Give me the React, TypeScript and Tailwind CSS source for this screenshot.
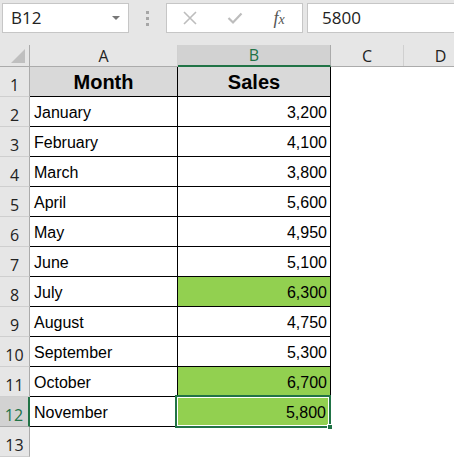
import React from "react";

const rows = [
  { m: "January", s: "3,200" },
  { m: "February", s: "4,100" },
  { m: "March", s: "3,800" },
  { m: "April", s: "5,600" },
  { m: "May", s: "4,950" },
  { m: "June", s: "5,100" },
  { m: "July", s: "6,300", hi: true },
  { m: "August", s: "4,750" },
  { m: "September", s: "5,300" },
  { m: "October", s: "6,700", hi: true },
  { m: "November", s: "5,800", hi: true, sel: true },
];

const ui = { fontFamily: '"Open Sans", "Noto Sans", sans-serif' };
const cell = { fontFamily: '"Liberation Sans", Arial, sans-serif' };

function RowHead({ n, active }: { n: number; active?: boolean }) {
  return (
    <div
      className={`h-[30px] w-[30px] shrink-0 border-b border-r flex items-end justify-center pb-0 text-[16px] leading-[22px] ${
        active
          ? "bg-[#d2d2d2] border-b-[#ababab] border-r-[#217346] border-r-2 text-[#217346]"
          : "bg-[#e6e6e6] border-b-[#cfcfcf] border-r-[#ababab] text-[#222]"
      }`}
      style={ui}
    >
      {n}
    </div>
  );
}

export default function App() {
  return (
    <div className="w-[454px] h-[460px] overflow-hidden bg-white relative select-none">
      {/* formula bar */}
      <div className="h-[45px] bg-[#e6e6e6] flex items-start pt-[3px] pl-[2px] gap-0">
        <div
          className="h-[30px] w-[127px] bg-white border border-[#c6c6c6] flex items-center justify-between pl-[8px] pr-[8px] text-[17px] text-[#222]"
          style={ui}
        >
          <span>B12</span>
          <span className="w-0 h-0 border-l-[4px] border-r-[4px] border-t-[4px] border-l-transparent border-r-transparent border-t-[#777]" />
        </div>
        <div className="w-[37px] h-[30px] flex flex-col items-center justify-center gap-[3px]">
          <span className="w-[3px] h-[3px] bg-[#a6a6a6]" />
          <span className="w-[3px] h-[3px] bg-[#a6a6a6]" />
          <span className="w-[3px] h-[3px] bg-[#a6a6a6]" />
        </div>
        <div className="h-[30px] w-[137px] bg-white border border-[#c6c6c6] flex items-center">
          <div className="w-[46px] flex justify-center">
            <svg width="14" height="14" viewBox="0 0 14 14">
              <path d="M1 1 L13 13 M13 1 L1 13" stroke="#bdbdbd" strokeWidth="1.6" />
            </svg>
          </div>
          <div className="w-[44px] flex justify-center">
            <svg width="16" height="14" viewBox="0 0 16 14">
              <path d="M1.5 7 L6 11.5 L14.5 2.5" stroke="#bdbdbd" strokeWidth="2.2" fill="none" />
            </svg>
          </div>
          <div
            className="w-[44px] flex justify-center text-[18px] italic text-[#555] leading-none"
            style={{ fontFamily: '"Liberation Serif", "Times New Roman", serif' }}
          >
            <span>f</span>
            <span className="text-[14px] self-end">x</span>
          </div>
        </div>
        <div
          className="ml-[4px] h-[30px] flex-1 bg-white border border-[#c6c6c6] border-r-0 flex items-center pl-[14px] text-[17px] text-[#222]"
          style={ui}
        >
          5800
        </div>
      </div>

      {/* column headers */}
      <div className="flex h-[22px] bg-[#e6e6e6] border-b border-[#ababab] text-[16px] text-[#222]" style={ui}>
        <div className="w-[30px] shrink-0 border-r border-[#ababab] relative">
          <span
            className="absolute right-[4px] bottom-[3px] w-0 h-0"
            style={{ borderBottom: "14px solid #bfbfbf", borderLeft: "14px solid transparent" }}
          />
        </div>
        <div className="w-[148px] shrink-0 border-r border-[#d0d0d0] flex items-center justify-center">A</div>
        <div className="w-[153px] shrink-0 bg-[#d2d2d2] border-r border-[#ababab] border-b-2 border-b-[#217346] -mb-px flex items-center justify-center text-[#217346]">
          B
        </div>
        <div className="w-[73px] shrink-0 border-r border-[#d0d0d0] flex items-center justify-center">C</div>
        <div className="w-[73px] shrink-0 flex items-center justify-center">D</div>
      </div>

      {/* row 1 */}
      <div className="flex">
        <RowHead n={1} />
        <div
          className="w-[148px] h-[30px] shrink-0 bg-[#d9d9d9] border-r border-b border-black flex items-end justify-center pb-px text-[20px] leading-[26px] font-bold text-black"
          style={cell}
        >
          Month
        </div>
        <div
          className="w-[153px] h-[30px] shrink-0 bg-[#d9d9d9] border-r border-b border-black flex items-end justify-center pb-px text-[20px] leading-[26px] font-bold text-black"
          style={cell}
        >
          Sales
        </div>
      </div>

      {rows.map((r, i) => (
        <div className="flex" key={r.m}>
          <RowHead n={i + 2} active={r.sel} />
          <div
            className={`h-[30px] shrink-0 border-r border-b border-black flex items-end pl-[4px] pb-[2px] text-[16px] leading-[22px] text-black ${
              r.sel ? "w-[147px]" : "w-[148px]"
            }`}
            style={cell}
          >
            {r.m}
          </div>
          <div
            className={`w-[153px] h-[30px] shrink-0 border-r border-b border-black flex items-end justify-end pr-[3px] pb-[2px] text-[16px] leading-[22px] text-black relative ${
              r.hi ? "bg-[#92d050]" : ""
            }`}
            style={cell}
          >
            {r.s}
            {r.sel && (
              <>
                <span className="absolute -left-[2px] -top-[2px] -right-[2px] -bottom-[2px] border-2 border-[#217346] pointer-events-none">
                  <span className="absolute inset-0 border border-white" />
                </span>
                <span className="absolute -right-[4px] -bottom-[4px] w-[6px] h-[6px] bg-[#217346] border border-white" />
              </>
            )}
          </div>
        </div>
      ))}

      <div className="flex">
        <RowHead n={13} />
      </div>
    </div>
  );
}
